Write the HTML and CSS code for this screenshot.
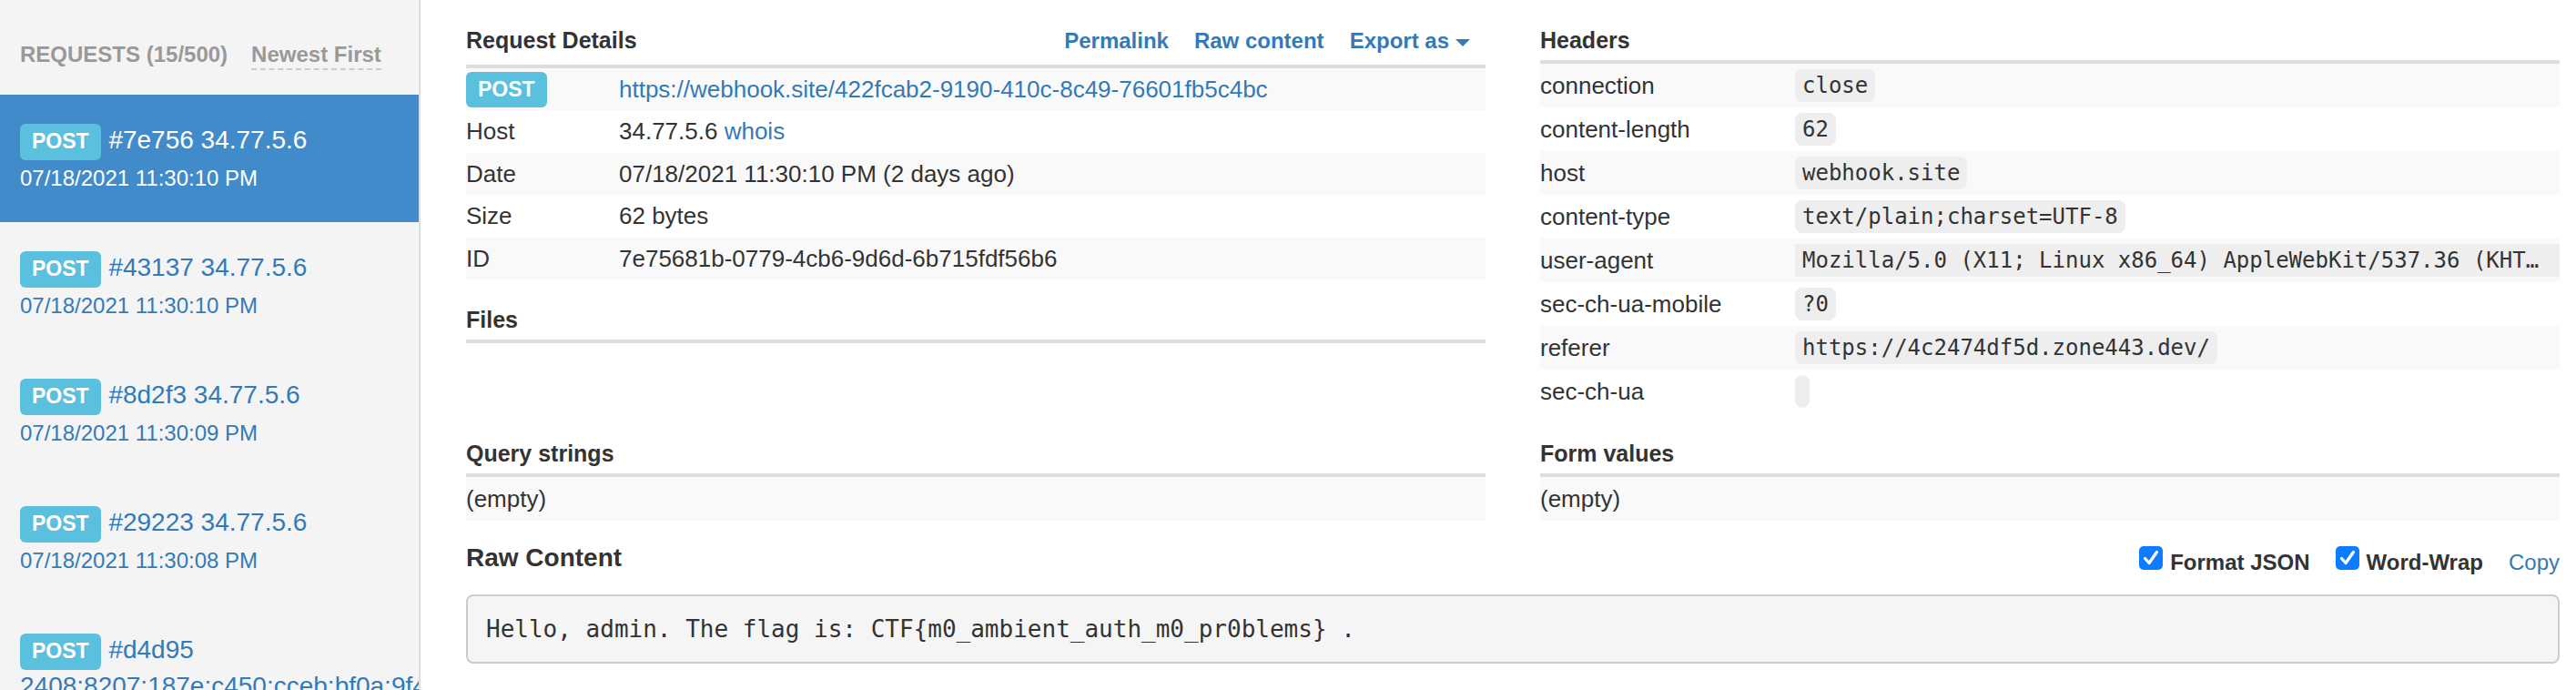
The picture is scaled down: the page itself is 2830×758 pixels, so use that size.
FILE: index.html
```html
<!DOCTYPE html>
<html lang="en">
<head>
<meta charset="utf-8">
<title>Webhook.site</title>
<link rel="stylesheet" href="styles.css">
</head>
<body>
<div class="app">
  <aside class="sidebar">
    <div class="side-head"><span class="req-count">REQUESTS (15/500)</span><span class="sort">Newest First</span></div>
    <div class="item active">
      <div class="item-title"><span class="label">POST</span> #7e756 34.77.5.6</div>
      <div class="item-date">07/18/2021 11:30:10 PM</div>
    </div>
    <div class="item">
      <div class="item-title"><span class="label">POST</span> #43137 34.77.5.6</div>
      <div class="item-date">07/18/2021 11:30:10 PM</div>
    </div>
    <div class="item">
      <div class="item-title"><span class="label">POST</span> #8d2f3 34.77.5.6</div>
      <div class="item-date">07/18/2021 11:30:09 PM</div>
    </div>
    <div class="item">
      <div class="item-title"><span class="label">POST</span> #29223 34.77.5.6</div>
      <div class="item-date">07/18/2021 11:30:08 PM</div>
    </div>
    <div class="item">
      <div class="item-title"><span class="label">POST</span> #d4d95 2408:8207:187e:c450:cceb:bf0a:9f4d:2b61</div>
    </div>
  </aside>

  <main class="main">
    <div class="grid">
      <section class="col">
        <div class="sec-head sec-head-tall">
          <h3>Request Details</h3>
          <nav class="actions">
            <a href="#">Permalink</a>
            <a href="#">Raw content</a>
            <a href="#">Export as<span class="caret"></span></a>
          </nav>
        </div>
        <table class="kv kv-details">
          <tr><td class="k"><span class="label">POST</span></td><td><a href="#">https://webhook.site/422fcab2-9190-410c-8c49-76601fb5c4bc</a></td></tr>
          <tr><td class="k">Host</td><td>34.77.5.6 <a href="#">whois</a></td></tr>
          <tr><td class="k">Date</td><td>07/18/2021 11:30:10 PM (2 days ago)</td></tr>
          <tr><td class="k">Size</td><td>62 bytes</td></tr>
          <tr><td class="k">ID</td><td>7e75681b-0779-4cb6-9d6d-6b715fdf56b6</td></tr>
        </table>
        <div class="sec-head"><h3>Files</h3></div>
      </section>

      <section class="col">
        <div class="sec-head"><h3>Headers</h3></div>
        <table class="kv kv-headers">
          <tr><td class="k">connection</td><td><code>close</code></td></tr>
          <tr><td class="k">content-length</td><td><code>62</code></td></tr>
          <tr><td class="k">host</td><td><code>webhook.site</code></td></tr>
          <tr><td class="k">content-type</td><td><code>text/plain;charset=UTF-8</code></td></tr>
          <tr><td class="k">user-agent</td><td><code class="wide">Mozilla/5.0 (X11; Linux x86_64) AppleWebKit/537.36 (KHTML, like Gecko) HeadlessChrome/93.0.4577.0 Safari/537.36</code></td></tr>
          <tr><td class="k">sec-ch-ua-mobile</td><td><code>?0</code></td></tr>
          <tr><td class="k">referer</td><td><code>https://4c2474df5d.zone443.dev/</code></td></tr>
          <tr><td class="k">sec-ch-ua</td><td><code></code></td></tr>
        </table>
      </section>

      <section class="col">
        <div class="sec-head"><h3>Query strings</h3></div>
        <div class="empty">(empty)</div>
      </section>

      <section class="col">
        <div class="sec-head"><h3>Form values</h3></div>
        <div class="empty">(empty)</div>
      </section>
    </div>

    <div class="raw-head">
      <h4>Raw Content</h4>
      <div class="opts">
        <label class="opt"><span class="cb"><svg width="26" height="26" viewBox="0 0 26 26"><path d="M6.5 13.5 L11 18.5 L19.5 6.5" fill="none" stroke="#fff" stroke-width="3.2" stroke-linecap="round" stroke-linejoin="round"/></svg></span><span>Format JSON</span></label>
        <label class="opt"><span class="cb"><svg width="26" height="26" viewBox="0 0 26 26"><path d="M6.5 13.5 L11 18.5 L19.5 6.5" fill="none" stroke="#fff" stroke-width="3.2" stroke-linecap="round" stroke-linejoin="round"/></svg></span><span>Word-Wrap</span></label>
        <a href="#" class="copy">Copy</a>
      </div>
    </div>
    <pre class="raw">Hello, admin. The flag is: CTF{m0_ambient_auth_m0_pr0blems} .</pre>
  </main>
</div>
</body>
</html>
```

FILE: styles.css
```css
* { box-sizing: border-box; }

html, body {
  margin: 0;
  padding: 0;
}

body {
  font-family: "Liberation Sans", Arial, Helvetica, sans-serif;
  font-size: 26px;
  color: #333;
  background: #fff;
  width: 2830px;
  height: 758px;
  overflow: hidden;
}

a {
  color: #337ab7;
  text-decoration: none;
}

.app {
  display: flex;
  height: 758px;
}

/* ---------- sidebar ---------- */
.sidebar {
  width: 462px;
  flex: none;
  background: #f4f4f4;
  border-right: 2px solid #ddd;
  overflow: hidden;
}

.side-head {
  padding: 42px 0 26px 22px;
  line-height: 36px;
  font-size: 24px;
  font-weight: bold;
  color: #999;
  white-space: nowrap;
}

.sort {
  margin-left: 26px;
  padding-bottom: 2px;
  border-bottom: 2px dashed #ccc;
}

.item {
  height: 140px;
  padding: 32px 0 0 22px;
  color: #337ab7;
}

.item.active {
  background: #428bca;
  color: #fff;
}

.item-title {
  font-size: 28px;
  line-height: 36px;
}

.item-date {
  font-size: 24px;
  line-height: 39px;
  white-space: nowrap;
}

.label {
  display: inline-block;
  background: #5bc0de;
  color: #fff;
  font-weight: bold;
  font-size: 23px;
  line-height: 25px;
  padding: 7px 13px 8px;
  border-radius: 6px;
}

.item .label {
  margin-right: 1px;
}

/* ---------- main ---------- */
.main {
  flex: 1;
  min-width: 0;
  padding: 0 18px 0 50px;
}

.grid {
  display: grid;
  grid-template-columns: 1fr 1fr;
  column-gap: 60px;
}

.col {
  min-width: 0;
}

.sec-head {
  display: flex;
  align-items: baseline;
  justify-content: space-between;
  padding: 26px 0 4px;
  line-height: 36px;
  border-bottom: 4px solid #ddd;
}

.sec-head-tall {
  padding-bottom: 8px;
}

.sec-head h3 {
  margin: 0;
  font-size: 25px;
  font-weight: bold;
  color: #333;
}

.actions {
  display: flex;
  gap: 28px;
  padding-right: 17px;
  font-size: 24px;
  font-weight: bold;
}

.caret {
  display: inline-block;
  width: 0;
  height: 0;
  margin-left: 7px;
  vertical-align: middle;
  border-top: 8px solid #337ab7;
  border-left: 8px solid transparent;
  border-right: 8px solid transparent;
}

/* tables */
.kv {
  width: 100%;
  border-collapse: collapse;
  table-layout: fixed;
  line-height: 36px;
}

.kv td {
  padding: 6px 0;
  vertical-align: top;
  white-space: nowrap;
  overflow: hidden;
}

.kv tr:nth-child(odd) td {
  background: #f9f9f9;
}

.kv-details td {
  padding: 5px 0 5.4px;
}

.kv-details td.k {
  width: 168px;
}

.kv-details .label {
  vertical-align: top;
  margin: -1px 0 -2px;
  padding: 7px 13px;
}

.kv-headers td.k {
  width: 280px;
}

code {
  display: inline-block;
  vertical-align: top;
  height: 36px;
  max-width: 100%;
  padding: 4px 8px;
  font-family: "DejaVu Sans Mono", "Liberation Mono", monospace;
  font-size: 24px;
  line-height: 28px;
  color: #333;
  background: #eee;
  border-radius: 8px;
  overflow: hidden;
  white-space: nowrap;
  text-overflow: ellipsis;
}

code.wide {
  display: block;
  padding-right: 22px;
  border-radius: 0;
}

.empty {
  padding: 6px 0;
  line-height: 36px;
  background: #f9f9f9;
}

/* raw content */
.raw-head {
  display: flex;
  align-items: flex-end;
  justify-content: space-between;
  margin-top: 21px;
}

.raw-head h4 {
  margin: 0;
  font-size: 28px;
  line-height: 40px;
  font-weight: bold;
  color: #333;
}

.opts {
  display: flex;
  align-items: flex-end;
  gap: 28px;
  font-size: 24px;
  line-height: 30px;
}

.opt {
  display: flex;
  align-items: flex-end;
  gap: 8px;
  font-weight: bold;
  color: #333;
}

.cb {
  display: block;
  width: 26px;
  height: 26px;
  margin-bottom: 7px;
  border-radius: 5px;
  background: #0f7bff;
}

.cb svg {
  display: block;
}

.raw {
  margin: 20px 0 0;
  padding: 18px 20px;
  font-family: "DejaVu Sans Mono", "Liberation Mono", monospace;
  font-size: 26px;
  line-height: 36px;
  color: #333;
  background: #f5f5f5;
  border: 2px solid #ccc;
  border-radius: 8px;
  white-space: pre-wrap;
}
```
